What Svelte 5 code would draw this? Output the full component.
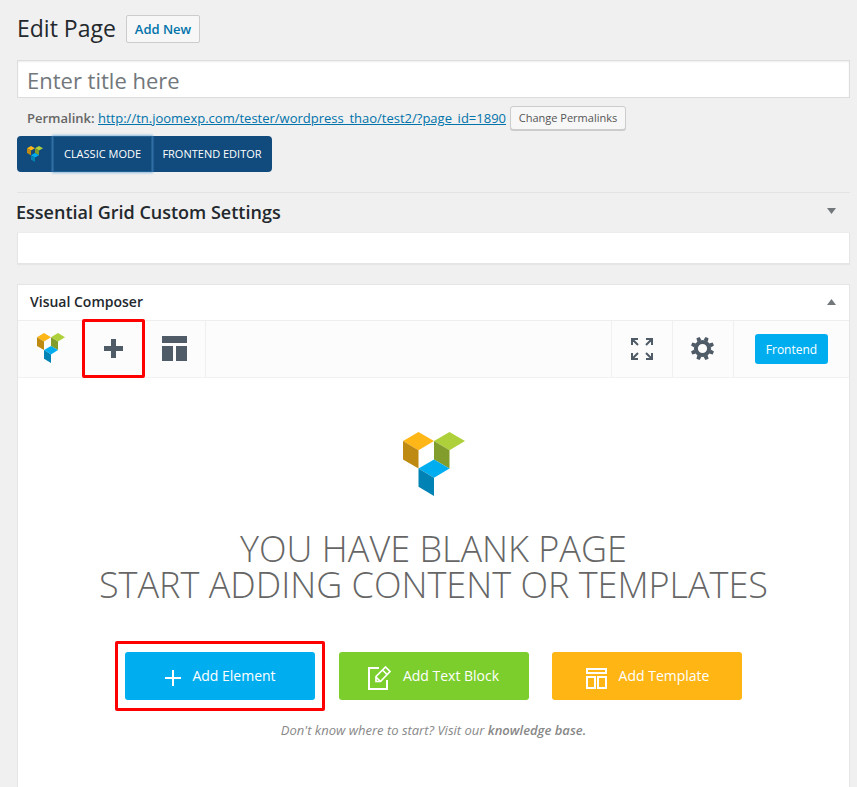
<script>
  const actions = [
    { label: 'Add Element', icon: 'plus', kind: 'blue' },
    { label: 'Add Text Block', icon: 'edit', kind: 'green' },
    { label: 'Add Template', icon: 'template', kind: 'amber' }
  ];
</script>

{#snippet logo(w, h)}
  <svg width={w} height={h} viewBox="0 0 62 64" preserveAspectRatio="none">
    <path fill="#ffb718" d="M0 9 15.5 0 31 9 15.5 18.3z" />
    <path fill="#bf8a12" d="M0 9 15.5 18.3V36.500L0 27.500z" />
    <path fill="#aed13b" d="M31 9 46.500 0 62 9 46.500 18.300z" />
    <path fill="#829d2c" d="M31 9 46.500 18.300V36.500L31 27.500z" />
    <path fill="#00aef0" d="M15.500 36.500 31 27.500 46.500 36.500 31 45.700z" />
    <path fill="#0083b4" d="M15.500 36.500 31 45.700V64L15.500 54.800z" />
  </svg>
{/snippet}

<main>
  <header>
    <h1>Edit Page</h1>
    <button class="add-new">Add New</button>
  </header>

  <div class="title-input">Enter title here</div>

  <div class="permalink">
    <strong>Permalink:</strong>
    <span class="url">http://tn.joomexp.com/tester/wordpress_thao/test2/?page_id=1890</span>
    <button>Change Permalinks</button>
  </div>

  <div class="modes">
    <span class="mode-logo">{@render logo(16, 16)}</span>
    <button class="classic">CLASSIC MODE</button>
    <button class="front">FRONTEND EDITOR</button>
  </div>

  <section class="grid-settings">
    <h2>Essential Grid Custom Settings</h2>
    <svg width="9" height="6" viewBox="0 0 9 6"><path fill="#72777c" d="M0 0h9L4.500 6z" /></svg>
  </section>
  <div class="empty-box"></div>

  <section class="composer">
    <div class="panel-head">
      <h3>Visual Composer</h3>
      <svg width="9" height="6" viewBox="0 0 9 6"><path fill="#72777c" d="M0 6h9L4.500 0z" /></svg>
    </div>
    <nav>
      <span class="tool brand">{@render logo(28, 30)}</span>
      <span class="tool marked">
        <svg width="19" height="19" viewBox="0 0 19 19"><path fill="#4f5b66" d="M7 0h5v7h7v5h-7v7H7v-7H0V7h7z" /></svg>
      </span>
      <span class="tool layout">
        <svg width="25" height="25" viewBox="0 0 25 25"><path fill="#4f5b66" d="M0 0h25v7H0zM0 10h11v15H0zM14 10h11v15H14z" /></svg>
      </span>
      <span class="spacer"></span>
      <span class="tool right expand">
        <svg width="22" height="22" viewBox="0 0 22 22" fill="none" stroke="#4f5b66" stroke-width="2">
          <path d="M1 7V1h6M1.500 1.500l5.500 5.500M15 1h6v6M20.500 1.500 15 7M1 15v6h6M1.500 20.500 7 15M21 15v6h-6M20.500 20.500 15 15" />
        </svg>
      </span>
      <span class="tool right gear">
        <svg width="23" height="23" viewBox="-11.500 -11.500 23 23">
          <circle r="6.600" fill="none" stroke="#4f5b66" stroke-width="4" />
          {#each [22.5, 67.5, 112.5, 157.5, 202.5, 247.5, 292.5, 337.5] as angle}
            <path fill="#4f5b66" d="M-2.200-8 -1.700-11.700H1.700L2.200-8z" transform="rotate({angle})" />
          {/each}
        </svg>
      </span>
      <span class="frontend-cell"><button>Frontend</button></span>
    </nav>

    <div class="blank">
      {@render logo(62, 64)}
      <p class="headline">YOU HAVE BLANK PAGE<br />START ADDING CONTENT OR TEMPLATES</p>
      <div class="actions">
        {#each actions as action}
          <div class="slot" class:marked={action.icon === 'plus'}>
            <button class={action.kind}>
              {#if action.icon === 'plus'}
                <svg width="16" height="16" viewBox="0 0 16 16"><path fill="#fff" d="M7 0h2v7h7v2H9v7H7V9H0V7h7z" /></svg>
              {:else if action.icon === 'edit'}
                <svg width="24" height="24" viewBox="0 0 24 24" fill="none" stroke="#fff" stroke-width="2">
                  <path d="M11 2H1v21h18v-9" />
                  <path stroke-width="1.700" d="M8 15.500v-5L17.500 1l4.500 4.500-9.500 10zM14.500 4l4.500 4.500M8 11l4.500 4.500" />
                </svg>
              {:else}
                <svg width="21" height="21" viewBox="0 0 21 21" fill="none" stroke="#fff" stroke-width="2"><path d="M1 1h19v4H1zM1 9h8v11H1zM12 9h8v11h-8z" /></svg>
              {/if}
              <span>{action.label}</span>
            </button>
          </div>
        {/each}
      </div>
      <p class="hint">Don't know where to start? Visit our <b>knowledge base.</b></p>
    </div>
  </section>
</main>

<style>
  :global(body) { background: #f0f0f0; overflow: hidden; }
  * { box-sizing: border-box; }
  main { height: 787px; overflow: hidden; padding: 0 7px 0 17px; display: flex; flex-direction: column; font-family: "Open Sans", sans-serif; color: #23282d; }
  h1, h2, h3, p { margin: 0; }
  button { font-family: inherit; padding: 0; white-space: nowrap; }
  svg { display: block; flex: none; }
  header { height: 60px; padding-top: 15px; display: flex; flex: none; }
  h1 { width: 109px; font-size: 23px; font-weight: 400; line-height: 27px; white-space: nowrap; }
  .add-new { width: 74px; height: 28px; border: 1px solid #ccc; border-radius: 2px; background: #f7f7f7; color: #0073aa; font-size: 13px; font-weight: 600; }
  .title-input { flex: none; height: 38px; border: 1px solid #ddd; background: #fff; box-shadow: inset 0 1px 2px rgba(0,0,0,.07); padding-left: 9px; font-size: 22px; line-height: 39px; color: #72777c; }
  .permalink { flex: none; height: 38px; padding: 8px 0 0 10px; display: flex; align-items: flex-start; font-size: 13px; line-height: 24px; color: #666; white-space: nowrap; }
  .permalink strong { width: 71px; font-weight: 600; }
  .url { width: 412px; color: #0073aa; text-decoration: underline; }
  .permalink button { width: 116px; height: 24px; border: 1px solid #ccc; border-radius: 3px; background: #f7f7f7; box-shadow: 0 1px 0 #ccc; color: #555; font-size: 11px; padding-bottom: 2px; }
  .modes { flex: none; width: 255px; height: 36px; display: flex; border-radius: 4px; background: #114b7d; }
  .mode-logo { width: 36px; padding: 10px 0 0 10px; }
  .modes button { border: 0; background: none; color: #fff; font-size: 11px; padding-bottom: 2px; }
  .modes .classic { width: 99px; box-shadow: inset 0 0 0 1px #225f93, 0 0 2px 1px rgba(91,157,217,.65); }
  .modes .front { width: 120px; }
  .grid-settings { flex: none; margin: 20px 0 0; height: 41px; border-top: 1px solid #e3e3e3; border-bottom: 1px solid #ececec; display: flex; justify-content: space-between; padding-right: 14px; }
  h2 { font-size: 18px; line-height: 39px; font-weight: 600; margin-left: -1px; }
  .grid-settings svg { margin-top: 15px; }
  .empty-box { flex: none; height: 31px; border: 1px solid #e5e5e5; border-top: 0; background: #fff; box-shadow: 0 1px 1px rgba(0,0,0,.04); }
  .composer { flex: 1; margin-top: 20px; border: 1px solid #e5e5e5; border-bottom: 0; background: #fff; display: flex; flex-direction: column; }
  .panel-head { flex: none; height: 36px; border-bottom: 1px solid #eee; display: flex; align-items: center; justify-content: space-between; padding: 0 13px 2px 12px; }
  h3 { font-size: 14px; line-height: 33px; font-weight: 600; }
  nav { flex: none; height: 57px; background: #fcfcfc; border-bottom: 1px solid #f2f2f2; display: flex; align-items: center; }
  .tool { height: 56px; display: flex; align-items: center; justify-content: center; }
  .brand { width: 64px; padding: 0 0 2px 1px; }
  nav .marked { width: 63px; height: 59px; border: 3px solid #f00; border-radius: 2px; z-index: 1; margin-top: -2px; padding-top: 1px; }
  .layout { width: 61px; border-right: 1px solid #f0f0f0; padding: 0 2px 2px 0; }
  .spacer { flex: 1; }
  .right { width: 61px; border-left: 1px solid #f0f0f0; }
  .expand { padding-bottom: 1px; }
  .gear { padding: 0 2px 2px 0; }
  .frontend-cell { width: 116px; height: 56px; border-left: 1px solid #f0f0f0; padding: 13px 0 0 21px; }
  .frontend-cell button { width: 73px; height: 30px; border: 0; border-radius: 3px; background: #00aef0; color: #fff; font-size: 12px; }
  .blank { display: flex; flex-direction: column; align-items: center; padding-top: 54px; }
  .headline { margin-top: 35px; font-size: 36px; line-height: 36px; font-weight: 300; color: #666; text-align: center; white-space: nowrap; }
  .actions { display: flex; margin-top: 38px; align-self: stretch; padding-left: 97px; }
  .slot { width: 213px; height: 70px; padding: 11px 0 0 14px; flex: none; }
  .slot.marked { width: 210px; border: 3px solid #f00; border-radius: 2px; padding: 8px 0 0 7px; }
  .slot button { width: 190px; height: 48px; border: 0; border-radius: 3px; display: flex; align-items: center; justify-content: center; color: #fff; font-size: 14px; }
  .slot svg { margin: 4px 12px 0 0; }
  .slot .blue svg { margin-right: 11px; }
  .slot .blue { padding-left: 1px; }
  .slot .green svg { margin-right: 11px; }
  .slot .green { padding-right: 1px; }
  .slot .amber { padding-left: 1px; }
  .slot span { line-height: 48px; }
  .blue { background: #00aef0; }
  .green { background: #7bce2c; }
  .amber { background: #ffb614; }
  .hint { margin-top: 10px; font-size: 13px; line-height: 18px; font-style: italic; color: #888; white-space: nowrap; }
  .hint b { font-weight: 600; }
</style>
